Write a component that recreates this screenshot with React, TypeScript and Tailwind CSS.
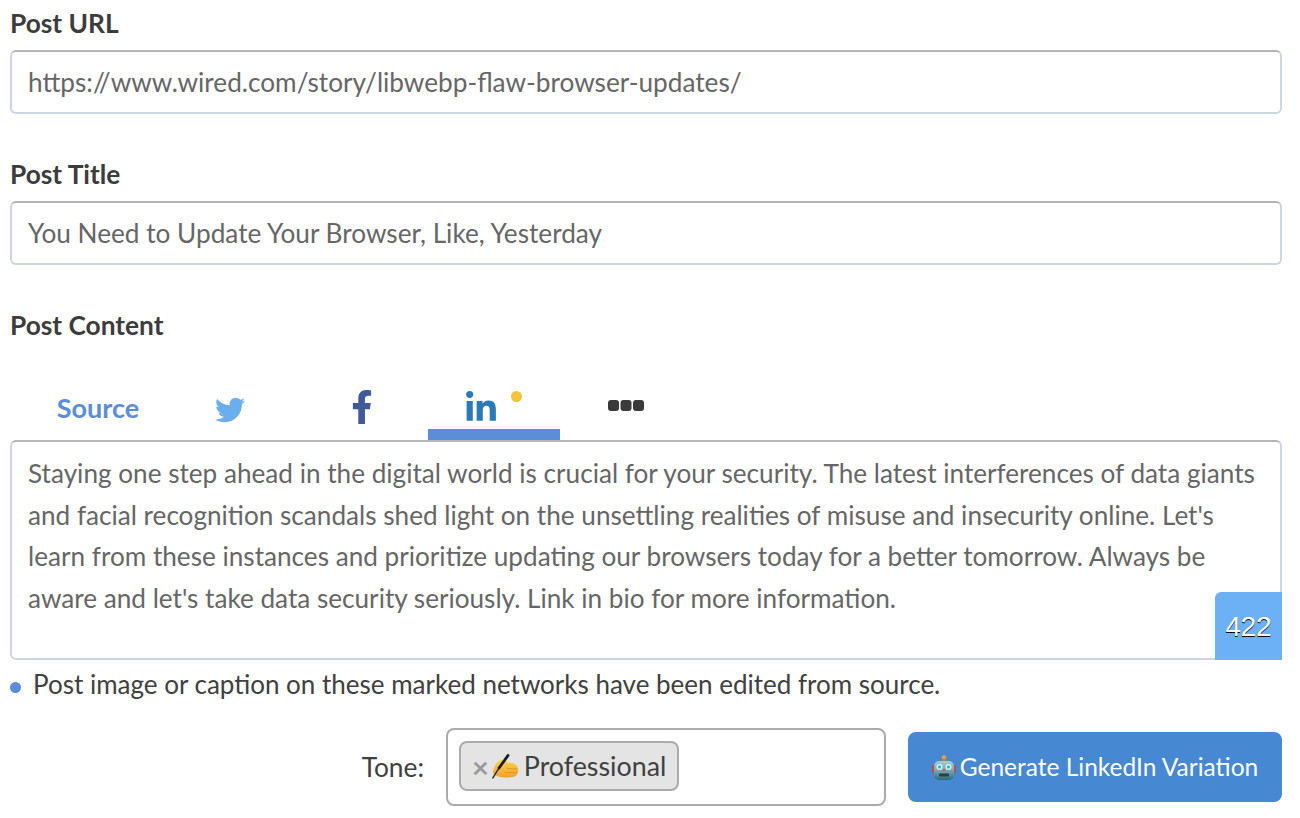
import { FaFacebookF, FaLinkedinIn, FaTwitter } from 'react-icons/fa'

const fieldClass =
  'h-16 w-full rounded-md border-2 border-[#ccd6e2] border-t-[#b5b5b5] bg-white px-4 text-[26.2px] leading-[60px] text-[#666]'

function Field({ label, value }: { label: string; value: string }) {
  return (
    <div className="flex flex-col">
      <p className="mb-[7px] text-[26.3px] leading-[39px] font-bold text-[#3c3c3c]">{label}</p>
      <div className={fieldClass}>{value}</div>
    </div>
  )
}

function Tab({ children, active }: { children: React.ReactNode; active?: boolean }) {
  return (
    <div className={`relative flex h-[60px] w-[132px] items-start justify-center pt-[9px] ${active ? 'border-b-[11px] border-[#5b8dd9]' : ''}`}>
      {children}
    </div>
  )
}

function WritingHand() {
  return (
    <svg width="27" height="25" viewBox="0 0 27 25" className="ml-[3px] shrink-0">
      <defs>
        <linearGradient id="hand" x1="0" y1="0" x2="0" y2="1">
          <stop offset="0" stopColor="#fcd34a" />
          <stop offset="1" stopColor="#f0a02a" />
        </linearGradient>
      </defs>
      <path d="M1 19 C1 12 6 6 10 6 C13 6 15 8 16 9 C20 8 25 10 26 14 C27 19 25 22 21 23 C14 24 5 24 1 19 Z" fill="url(#hand)" />
      <path d="M16 1.5 L7 14" stroke="#1c1c1c" strokeWidth="2.8" strokeLinecap="round" />
      <path d="M7 14 L0.5 24.5" stroke="#1c1c1c" strokeWidth="1.4" />
      <path d="M15 14.5 L25 15 M13 18.5 L25 18.5" stroke="#d98f22" strokeWidth="0.8" />
    </svg>
  )
}

function Robot() {
  return (
    <svg width="24" height="25" viewBox="0 0 24 25" className="shrink-0">
      <defs>
        <linearGradient id="head" x1="0" y1="0" x2="0" y2="1">
          <stop offset="0" stopColor="#a9cdd2" />
          <stop offset="0.55" stopColor="#6ea3ad" />
          <stop offset="1" stopColor="#2c6b7c" />
        </linearGradient>
      </defs>
      <circle cx="12" cy="2.5" r="2.2" fill="#e8a53a" />
      <rect x="10.5" y="3.5" width="3" height="3" fill="#c4823a" />
      <rect x="0" y="10" width="3.5" height="8" rx="1.5" fill="#c9483f" />
      <rect x="20.5" y="10" width="3.5" height="8" rx="1.5" fill="#c9483f" />
      <rect x="2" y="6" width="20" height="19" rx="5" fill="url(#head)" />
      <circle cx="7.5" cy="12" r="3" fill="#e6f5f7" />
      <circle cx="16.5" cy="12" r="3" fill="#e6f5f7" />
      <circle cx="7.5" cy="12" r="1.7" fill="#22b8d8" />
      <circle cx="16.5" cy="12" r="1.7" fill="#22b8d8" />
      <path d="M12 13.5 L13.5 16 L10.5 16 Z" fill="#d9544a" />
      <rect x="7" y="18.5" width="10" height="3" rx="1" fill="#2f3d44" />
    </svg>
  )
}

function Dots() {
  return (
    <svg width="36" height="11" viewBox="0 0 36 11" className="mt-[11px] fill-[#3a3a3a]">
      <rect x="0" y="0" width="11" height="11" rx="3" />
      <rect x="12.5" y="0" width="11" height="11" rx="3" />
      <rect x="25" y="0" width="11" height="11" rx="3" />
    </svg>
  )
}

export default function App() {
  return (
    <div className="h-[818px] w-[1300px] overflow-hidden bg-white pt-[4px] pl-[10px] font-['Lato','Open_Sans',sans-serif]">
      <div className="flex w-[1272px] flex-col">
        <div className="flex flex-col gap-[41px]">
          <Field label="Post URL" value="https://www.wired.com/story/libwebp-flaw-browser-updates/" />
          <Field label="Post Title" value="You Need to Update Your Browser, Like, Yesterday" />
        </div>

        <p className="mt-[41px] text-[26.3px] leading-[39px] font-bold text-[#3c3c3c]">Post Content</p>

        <div className="mt-[35px] flex pl-[22px]">
          <Tab>
            <span className="mt-[1px] text-[27px] leading-[36px] font-bold text-[#5b8dd9]">Source</span>
          </Tab>
          <Tab>
            <FaTwitter className="mt-[6px] h-[30px] w-[30px] text-[#6aaeee]" />
          </Tab>
          <Tab>
            <FaFacebookF className="mt-[1px] h-[34px] w-[34px] text-[#3f5a96]" />
          </Tab>
          <Tab active>
            <FaLinkedinIn className="mt-[2px] -ml-[26px] h-[34px] w-[34px] text-[#2b7ab8]" />
            <span className="absolute top-[11px] left-[83px] h-[11px] w-[11px] rounded-full bg-[#f5c33b]" />
          </Tab>
          <Tab>
            <Dots />
          </Tab>
        </div>

        <div className="relative h-[220px] rounded-md border-2 border-[#ccd6e2] border-t-[#b5b5b5] bg-white px-4 pt-[11px] text-[26.15px] leading-[41.7px] text-[#666]">
          <p className="whitespace-nowrap">Staying one step ahead in the digital world is crucial for your security. The latest interferences of data giants</p>
          <p className="whitespace-nowrap">and facial recognition scandals shed light on the unsettling realities of misuse and insecurity online. Let's</p>
          <p className="whitespace-nowrap">learn from these instances and prioritize updating our browsers today for a better tomorrow. Always be</p>
          <p className="whitespace-nowrap">aware and let's take data security seriously. Link in bio for more information.</p>
          <div className="absolute -right-[2px] -bottom-[2px] flex h-[68px] w-[67px] items-center justify-center rounded-tl-md bg-[#6cb1f5] pt-[1px] font-['Liberation_Sans',sans-serif] text-[27.5px] text-white [text-shadow:0_1px_0_#000]">
            422
          </div>
        </div>

        <div className="mt-[6px] flex items-center">
          <span className="mt-[7px] h-[11px] w-[11px] rounded-full bg-[#5b8dd9]" />
          <span className="ml-[12px] text-[26px] leading-[36px] text-[#404040]">Post image or caption on these marked networks have been edited from source.</span>
        </div>

        <div className="mt-[26px] flex items-center justify-end">
          <span className="pt-[1px] text-[26.3px] text-[#404040]">Tone:</span>
          <div className="ml-[22px] flex h-[78px] w-[440px] items-center rounded-lg border-2 border-[#ababab] bg-white pl-[11px]">
            <div className="mb-[2px] flex h-[50px] w-[220px] items-center rounded-lg border-2 border-[#ababab] bg-[#e4e4e4] pl-[11px]">
              <span className="text-[29px] leading-none font-bold text-[#999]">×</span>
              <WritingHand />
              <span className="ml-[5px] text-[26.8px] leading-none text-[#404040]">Professional</span>
            </div>
          </div>
          <button className="ml-[22px] flex h-[70px] w-[374px] items-center justify-center gap-[4px] rounded-lg bg-[#4788d2] text-[24.5px] text-white">
            <Robot />
            Generate LinkedIn Variation
          </button>
        </div>
      </div>
    </div>
  )
}
